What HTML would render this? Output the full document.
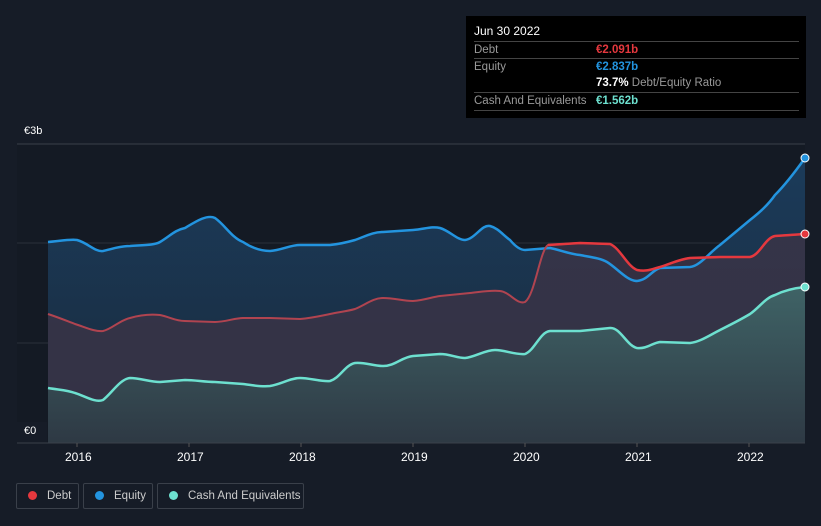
<!DOCTYPE html>
<html><head><meta charset="utf-8"><style>
body{margin:0;width:821px;height:526px;background:#161c27;font-family:"Liberation Sans",sans-serif;overflow:hidden;position:relative}
.tt{position:absolute;left:466px;top:16px;width:340px;height:102px;background:#000;color:#fff;font-size:11.5px}
.row{position:absolute;left:8px;width:325px;border-top:1px solid #444;height:17px;line-height:17px;color:#999}
.row span{position:absolute;left:122px}
.lbl{position:absolute;color:#fff;font-size:12px}
.leg{position:absolute;top:483px;height:26px;border:1px solid #3a404a;border-radius:2px;color:#ccc;font-size:11.5px;line-height:25px;box-sizing:border-box;white-space:nowrap}
.dot{display:inline-block;width:9px;height:9px;border-radius:50%;margin:0 10px 0 11px;vertical-align:-1px}
</style></head><body>
<svg width="821" height="526" style="position:absolute;left:0;top:0">
<defs>
<linearGradient id="g1" x1="0" y1="0" x2="0" y2="1"><stop offset="0" stop-color="#1b3b5a"/><stop offset="1" stop-color="#1a2a3c"/></linearGradient>
<linearGradient id="g3" x1="0" y1="0" x2="0" y2="1"><stop offset="0" stop-color="#3f6366"/><stop offset="1" stop-color="#2e3944"/></linearGradient>
</defs>
<rect x="17" y="144" width="788" height="299" fill="#141a24"/>
<line x1="17" y1="144" x2="805" y2="144" stroke="#3a404a"/>
<line x1="17" y1="243" x2="805" y2="243" stroke="#2a303a"/>
<line x1="17" y1="343" x2="805" y2="343" stroke="#2a303a"/>
<path d="M48,242 C60,241 70,239 77,240 C88,243 95,252 103,251 C112,249 120,246 130,246 C145,245 155,245 160,242 C170,236 175,230 185,228 C195,222 207,214 215,218 C225,225 232,238 243,242 C252,248 260,251 270,251 C282,250 290,245 300,245 L330,245 C340,244 348,242 355,240 C366,236 373,232 383,232 L413,230 C425,229 432,226 440,228 C450,231 457,240 465,240 C475,239 482,224 490,226 C498,228 503,235 510,240 C515,246 520,250 525,250 L550,248 C560,250 570,254 580,255 C590,257 600,258 607,262 C617,268 627,281 637,281 C648,280 652,270 660,268 L690,267 C700,266 710,252 720,245 L750,220 C760,212 768,205 775,195 C785,185 795,172 805,158 L805,443 L48,443Z" fill="url(#g1)"/>
<path d="M48,314 C60,318 67,321 75,324 C85,327 95,332 103,331 C112,329 120,320 130,318 C140,315 150,314 160,315 C170,317 175,321 185,321 L215,322 C225,322 235,318 243,318 L270,318 L300,319 C312,318 320,316 330,314 C340,312 348,311 355,309 C365,305 373,298 383,298 C395,298 402,301 413,301 C425,300 432,297 440,296 C450,295 460,294 470,293 C480,292 490,290 500,291 C510,292 517,305 525,302 C535,295 540,250 548,245 L580,243 L610,244 C620,248 627,266 637,270 C647,272 652,269 660,267 C670,264 680,259 690,258 L720,257 L750,257 C760,255 765,238 775,236 L805,234 L805,443 L48,443Z" fill="#3a3447" opacity="0.85"/>
<path d="M48,388 C60,390 67,390 75,393 C85,396 95,403 103,400 C112,393 120,379 130,378 C140,378 150,382 160,382 L185,380 C195,380 205,382 215,382 L243,384 C252,385 260,387 270,386 C282,384 290,378 300,378 C310,378 322,382 330,381 C340,378 345,365 355,363 C365,362 373,366 383,366 C395,366 402,357 413,356 L440,354 C450,354 457,358 465,358 C475,357 485,350 495,350 C505,350 515,355 525,354 C535,350 540,332 550,331 L580,331 L610,328 C620,327 627,346 637,348 C647,349 652,343 660,342 L690,343 C700,342 710,335 720,330 C730,325 740,320 750,314 C760,307 765,298 775,295 C785,290 795,288 805,287 L805,443 L48,443Z" fill="url(#g3)"/>
<path d="M48,242 C60,241 70,239 77,240 C88,243 95,252 103,251 C112,249 120,246 130,246 C145,245 155,245 160,242 C170,236 175,230 185,228 C195,222 207,214 215,218 C225,225 232,238 243,242 C252,248 260,251 270,251 C282,250 290,245 300,245 L330,245 C340,244 348,242 355,240 C366,236 373,232 383,232 L413,230 C425,229 432,226 440,228 C450,231 457,240 465,240 C475,239 482,224 490,226 C498,228 503,235 510,240 C515,246 520,250 525,250 L550,248 C560,250 570,254 580,255 C590,257 600,258 607,262 C617,268 627,281 637,281 C648,280 652,270 660,268 L690,267 C700,266 710,252 720,245 L750,220 C760,212 768,205 775,195 C785,185 795,172 805,158" fill="none" stroke="#2394df" stroke-width="2.5"/>
<path d="M48,314 C60,318 67,321 75,324 C85,327 95,332 103,331 C112,329 120,320 130,318 C140,315 150,314 160,315 C170,317 175,321 185,321 L215,322 C225,322 235,318 243,318 L270,318 L300,319 C312,318 320,316 330,314 C340,312 348,311 355,309 C365,305 373,298 383,298 C395,298 402,301 413,301 C425,300 432,297 440,296 C450,295 460,294 470,293 C480,292 490,290 500,291 C510,292 517,305 525,302 C535,295 540,250 548,245 L580,243 L610,244 C620,248 627,266 637,270 C647,272 652,269 660,267 C670,264 680,259 690,258 L720,257 L750,257 C760,255 765,238 775,236 L805,234" fill="none" stroke="#b04450" stroke-width="2"/>
<path d="M548,245 L580,243 L610,244 C620,248 627,266 637,270 C647,272 652,269 660,267 C670,264 680,259 690,258 L720,257 L750,257 C760,255 765,238 775,236 L805,234" fill="none" stroke="#e5383e" stroke-width="2.5"/>
<path d="M48,388 C60,390 67,390 75,393 C85,396 95,403 103,400 C112,393 120,379 130,378 C140,378 150,382 160,382 L185,380 C195,380 205,382 215,382 L243,384 C252,385 260,387 270,386 C282,384 290,378 300,378 C310,378 322,382 330,381 C340,378 345,365 355,363 C365,362 373,366 383,366 C395,366 402,357 413,356 L440,354 C450,354 457,358 465,358 C475,357 485,350 495,350 C505,350 515,355 525,354 C535,350 540,332 550,331 L580,331 L610,328 C620,327 627,346 637,348 C647,349 652,343 660,342 L690,343 C700,342 710,335 720,330 C730,325 740,320 750,314 C760,307 765,298 775,295 C785,290 795,288 805,287" fill="none" stroke="#6de0cf" stroke-width="2.5"/>
<circle cx="805" cy="158" r="4" fill="#2394df" stroke="#fff" stroke-width="1"/>
<circle cx="805" cy="234" r="4" fill="#e5383e" stroke="#fff" stroke-width="1"/>
<circle cx="805" cy="287" r="4" fill="#6de0cf" stroke="#fff" stroke-width="1"/>
<rect x="17" y="422" width="30" height="21" fill="#161c27"/>
<line x1="17" y1="443" x2="805" y2="443" stroke="#3a404a"/>
<g stroke="#555"><line x1="77" y1="443" x2="77" y2="447"/><line x1="189" y1="443" x2="189" y2="447"/><line x1="301" y1="443" x2="301" y2="447"/><line x1="413" y1="443" x2="413" y2="447"/><line x1="525" y1="443" x2="525" y2="447"/><line x1="637" y1="443" x2="637" y2="447"/><line x1="749" y1="443" x2="749" y2="447"/></g>
</svg>
<div class="lbl" style="left:24px;top:125px;font-size:11px">€3b</div>
<div class="lbl" style="left:24px;top:425px;font-size:11px">€0</div>
<div class="lbl" style="left:65px;top:450px">2016</div>
<div class="lbl" style="left:177px;top:450px">2017</div>
<div class="lbl" style="left:289px;top:450px">2018</div>
<div class="lbl" style="left:401px;top:450px">2019</div>
<div class="lbl" style="left:513px;top:450px">2020</div>
<div class="lbl" style="left:625px;top:450px">2021</div>
<div class="lbl" style="left:737px;top:450px">2022</div>
<div class="tt">
<div style="position:absolute;left:8px;top:8px;font-size:12px">Jun 30 2022</div>
<div class="row" style="top:25px">Debt<span style="color:#e5383e;font-weight:bold">€2.091b</span></div>
<div class="row" style="top:42px">Equity<span style="color:#2394df;font-weight:bold">€2.837b</span></div>
<div class="row" style="top:59px;border-top:none"><span><b style="color:#fff">73.7%</b> Debt/Equity Ratio</span></div>
<div class="row" style="top:76px">Cash And Equivalents<span style="color:#6de0cf;font-weight:bold">€1.562b</span></div>
<div class="row" style="top:94px;height:0"></div>
</div>
<div class="leg" style="left:16px;width:63px"><span class="dot" style="background:#e5383e"></span>Debt</div>
<div class="leg" style="left:83px;width:70px"><span class="dot" style="background:#2394df"></span>Equity</div>
<div class="leg" style="left:157px;width:147px"><span class="dot" style="background:#6de0cf"></span>Cash And Equivalents</div>
</body></html>
